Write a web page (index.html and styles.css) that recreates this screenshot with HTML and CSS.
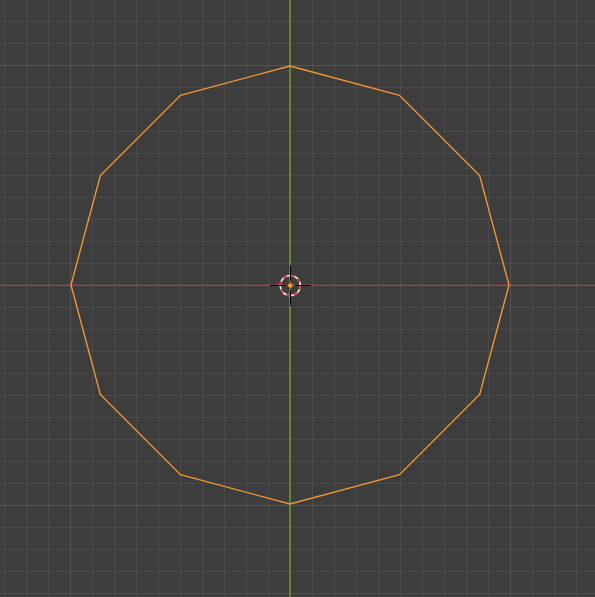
FILE: index.html
```html
<!DOCTYPE html>
<html>
<head>
<meta charset="utf-8">
<link rel="stylesheet" href="styles.css">
</head>
<body>
<div class="viewport">
  <svg class="scene" width="595" height="597" viewBox="0 0 595 597">
    <rect class="axis-x" x="0" y="284.6" width="595" height="1.2"/>
    <rect class="axis-y" x="289" y="0" width="2" height="597"/>
    <polygon class="mesh" points="290,66 399.5,95.34 479.66,175.5 509,285 479.66,394.5 399.5,474.66 290,504 180.5,474.66 100.34,394.5 71,285 100.34,175.5 180.5,95.34"/>
    <g class="cursor">
      <circle class="ring-white" cx="290.3" cy="285.5" r="10"/>
      <circle class="ring-red" cx="290.3" cy="285.5" r="10"/>
      <rect class="cross" x="270" y="285" width="16" height="1"/>
      <rect class="cross" x="295" y="285" width="16" height="1"/>
      <rect class="cross" x="290" y="265" width="1" height="16"/>
      <rect class="cross" x="290" y="290" width="1" height="16"/>
      <circle class="origin" cx="290.3" cy="285.5" r="2.8"/>
    </g>
  </svg>
</div>
</body>
</html>
```
FILE: styles.css
```css
html, body {
  margin: 0;
  padding: 0;
  background: #3d3d3d;
  overflow: hidden;
}
.viewport {
  position: relative;
  width: 595px;
  height: 597px;
  background-color: #3d3d3d;
  background-image:
    linear-gradient(to right, #565656 1px, transparent 1px),
    linear-gradient(to bottom, #565656 1px, transparent 1px),
    linear-gradient(to right, #4a4a4a 1px, transparent 1px),
    linear-gradient(to bottom, #4a4a4a 1px, transparent 1px);
  background-size: 220px 220px, 220px 220px, 22px 22px, 22px 22px;
  background-position: 70px 0, 0 65px, 4px 0, 0 21px;
}
.scene {
  position: absolute;
  left: 0;
  top: 0;
  display: block;
}
.axis-x { fill: #a8444f; }
.axis-y { fill: #62882c; }
.mesh {
  fill: none;
  stroke: #ee982e;
  stroke-width: 1.4;
  stroke-linejoin: miter;
}
.ring-white {
  fill: none;
  stroke: #e8e8e8;
  stroke-width: 1.6;
}
.ring-red {
  fill: none;
  stroke: #e0262e;
  stroke-width: 1.6;
  stroke-dasharray: 3.93 3.93;
}
.cross { fill: #000000; }
.origin {
  fill: #f39a28;
  stroke: #3a2a10;
  stroke-width: 0.8;
}
```
